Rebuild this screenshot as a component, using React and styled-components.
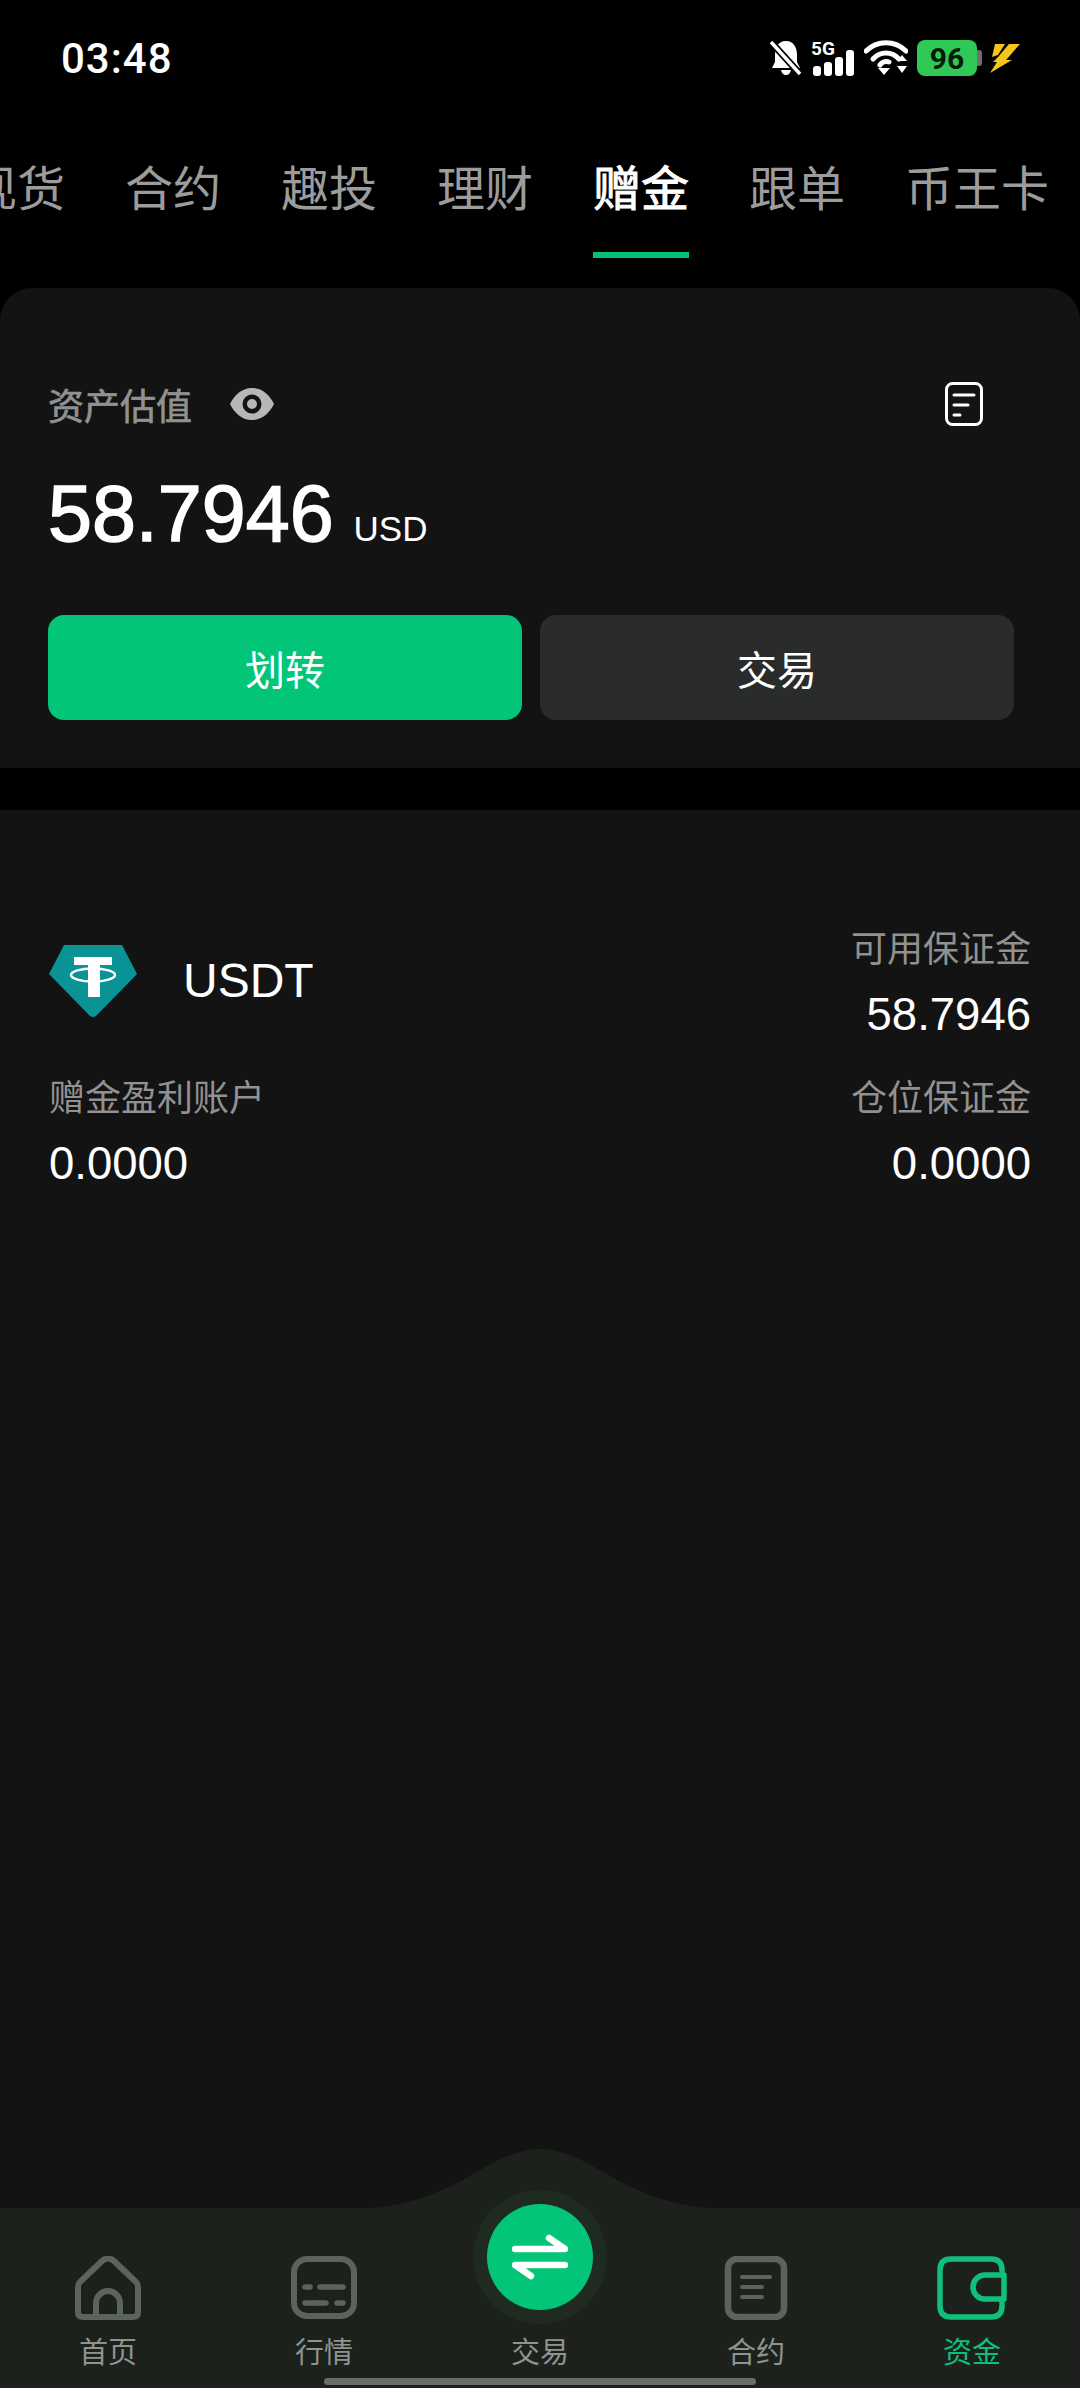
import React from 'react';
import styled, { createGlobalStyle } from 'styled-components';

const GlobalStyle = createGlobalStyle`
    html, body {
        margin: 0;
        padding: 0;
        background: #000;
    }
    * {
        box-sizing: border-box;
    }
`

const cjk = `"Noto Sans CJK SC", "Noto Sans", sans-serif`;
const latin = `"Liberation Sans", "Noto Sans CJK SC", sans-serif`;

const tabs = [
    { name: '现货' },
    { name: '合约' },
    { name: '趣投' },
    { name: '理财' },
    { name: '赠金', active: true },
    { name: '跟单' },
    { name: '币王卡' },
];

const HomeIcon = () => (
    <svg width="66" height="64" viewBox="0 0 66 64" fill="none" stroke="#5b645c" strokeWidth="6" strokeLinejoin="round">
        <path d="M3 31 Q3 28 5 26 L27 5 Q33 0 39 5 L61 26 Q63 28 63 31 L63 56 Q63 61 58 61 L8 61 Q3 61 3 56 Z" />
        <path d="M21 61 L21 47 A12 12 0 0 1 45 47 L45 61" />
    </svg>
);

const MarketIcon = () => (
    <svg width="66" height="64" viewBox="0 0 66 64" fill="none" stroke="#5b645c" strokeLinecap="round">
        <rect x="3" y="3" width="60" height="57" rx="13" strokeWidth="6" />
        <path d="M14 31 L19 31 M29 31 L52 31 M14 47 L35 47 M46 47 L52 47" strokeWidth="5.5" />
    </svg>
);

const ContractIcon = () => (
    <svg width="66" height="64" viewBox="0 0 66 64" fill="none" stroke="#5b645c" strokeLinecap="round">
        <rect x="5" y="3" width="56" height="58" rx="9" strokeWidth="6.5" />
        <path d="M19 21 L47 21 M19 31 L39 31 M19 41 L39 41" strokeWidth="4" />
    </svg>
);

const WalletIcon = () => (
    <svg width="70" height="64" viewBox="0 0 70 64" fill="none" stroke="#10bf7a" strokeWidth="5.5" strokeLinejoin="round">
        <path d="M65 19 L65 14 Q65 3 54 3 L14 3 Q3 3 3 14 L3 50 Q3 61 14 61 L54 61 Q65 61 65 50 L65 43" />
        <path d="M67 19 L48 19 A12 12 0 0 0 48 43 L67 43 Z" />
    </svg>
);

const navItems = [
    { label: '首页', icon: <HomeIcon /> },
    { label: '行情', icon: <MarketIcon /> },
    { label: '交易', center: true },
    { label: '合约', icon: <ContractIcon /> },
    { label: '资金', icon: <WalletIcon />, active: true },
];

const App = () => {
    return (<Page>
        <GlobalStyle />
        <StatusBar>
            <Clock>03:48</Clock>
            <StatusIcons>
                <svg width="32" height="36" viewBox="0 0 32 36">
                    <path d="M16 1 C24 1 27 8 27 15 L27 22 L30 28 L2 28 L5 22 L5 15 C5 8 8 1 16 1 Z M11 30 L21 30 Q20 35 16 35 Q12 35 11 30 Z" fill="#fff" />
                    <path d="M1 2 L30 34" stroke="#000" strokeWidth="7" />
                    <path d="M1 2 L30 34" stroke="#fff" strokeWidth="3.5" />
                </svg>
                <Signal>
                    <SignalLabel>5G</SignalLabel>
                    <svg width="44" height="36" viewBox="0 0 44 36" fill="#fff">
                        <rect x="2" y="26" width="8" height="10" rx="3" />
                        <rect x="13" y="22" width="8" height="14" rx="3" />
                        <rect x="24" y="17" width="8" height="19" rx="3" />
                        <rect x="35" y="10" width="8" height="26" rx="3" />
                    </svg>
                </Signal>
                <svg width="44" height="36" viewBox="0 0 44 36" fill="none" stroke="#fff" strokeWidth="5" strokeLinecap="round">
                    <path d="M2 11 C13 0 31 0 42 11" />
                    <path d="M9 19 C16 11 28 11 35 19" />
                    <path d="M16 25 C18 22 22 21 25 22" />
                    <path d="M14 28 L26 28 L20 35 Z M33 21 L38 15 L43 21 Z M33 26 L43 26 L38 33 Z" fill="#fff" stroke="none" />
                </svg>
                <Battery>96</Battery>
                <svg width="30" height="30" viewBox="0 0 30 30" fill="#f5c518">
                    <path d="M5 1 L15 1 L8 12 L2 14 Z" />
                    <path d="M19 1 L30 1 L16 17 L22 17 L0 30 L7 19 L3 19 L8 14 Z" />
                </svg>
            </StatusIcons>
        </StatusBar>

        <TabRow>
            {tabs.map(tab => <Tab key={tab.name} $active={tab.active}>{tab.name}</Tab>)}
        </TabRow>

        <AssetCard>
            <CardHead>
                <LabelGroup>
                    <Label $strong>资产估值</Label>
                    <svg width="44" height="32" viewBox="0 0 44 32">
                        <path fillRule="evenodd" fill="#b7b7b7" d="M22 0 C33 0 40 8 44 16 C40 24 33 32 22 32 C11 32 4 24 0 16 C4 8 11 0 22 0 Z M22 6.5 A9.5 9.5 0 1 0 22 25.5 A9.5 9.5 0 1 0 22 6.5 Z M22 11 A5 5 0 1 1 22 21 A5 5 0 1 1 22 11 Z" />
                    </svg>
                </LabelGroup>
                <svg width="38" height="44" viewBox="0 0 38 44" fill="none" stroke="#fff" strokeLinecap="round">
                    <rect x="1.5" y="1.5" width="35" height="41" rx="6" strokeWidth="3" />
                    <path d="M9 13 L29 13 M9 23 L23 23 M9 33 L15 33" strokeWidth="3" />
                </svg>
            </CardHead>
            <ValueRow>
                <BigValue>58.7946</BigValue>
                <Unit>USD</Unit>
            </ValueRow>
            <ButtonRow>
                <ActionButton $primary>划转</ActionButton>
                <ActionButton>交易</ActionButton>
            </ButtonRow>
        </AssetCard>

        <Account>
            <AccountRow>
                <CoinGroup>
                    <svg width="88" height="72" viewBox="0 0 88 72">
                        <path d="M15 0 L73 0 L88 29 L47 71 Q44 73 41 71 L0 29 Z" fill="#0a9395" />
                        <path d="M25 12 L63 12 L63 20 L51 20 L51 52 L39 52 L39 20 L25 20 Z" fill="#fff" />
                        <ellipse cx="44" cy="30" rx="22" ry="6.5" fill="none" stroke="#fff" strokeWidth="2.5" />
                    </svg>
                    <CoinName>USDT</CoinName>
                </CoinGroup>
                <Stat $right>
                    <Label>可用保证金</Label>
                    <StatValue>58.7946</StatValue>
                </Stat>
            </AccountRow>
            <AccountRow>
                <Stat>
                    <Label>赠金盈利账户</Label>
                    <StatValue>0.0000</StatValue>
                </Stat>
                <Stat $right>
                    <Label>仓位保证金</Label>
                    <StatValue>0.0000</StatValue>
                </Stat>
            </AccountRow>
        </Account>

        <BottomNav>
            <Hump width="420" height="62" viewBox="0 0 420 62">
                <path d="M0 62 C70 62 100 50 140 28 C170 10 190 1 210 1 C230 1 250 10 280 28 C320 50 350 62 420 62 Z" fill="#1c211c" />
            </Hump>
            <TradeRing>
                <TradeButton>
                    <svg width="56" height="46" viewBox="0 0 56 46" fill="none" stroke="#fff" strokeWidth="6.5" strokeLinecap="round" strokeLinejoin="round">
                        <path d="M3 15 L53 15 L37 4" />
                        <path d="M53 31 L3 31 L19 42" />
                    </svg>
                </TradeButton>
            </TradeRing>
            {navItems.map(item => (
                <NavItem key={item.label} $active={item.active}>
                    <NavIcon>{item.icon}</NavIcon>
                    {item.label}
                </NavItem>
            ))}
            <HomeBar />
        </BottomNav>
    </Page>);
}

export default App;

const Page = styled.div`
    display: flex;
    flex-direction: column;
    width: 1080px;
    height: 2388px;
    overflow: hidden;
    background: #000;
    font-family: ${cjk};
`

const StatusBar = styled.div`
    display: flex;
    align-items: center;
    justify-content: space-between;
    height: 116px;
    padding: 0 60px 0 61px;
`

const Clock = styled.div`
    font-family: Roboto, sans-serif;
    font-weight: 500;
    font-size: 42px;
    letter-spacing: 1px;
    color: #fff;
`

const StatusIcons = styled.div`
    display: flex;
    align-items: center;
    gap: 9px;
`

const Signal = styled.div`
    position: relative;
    display: flex;
    width: 44px;
    height: 36px;
`

const SignalLabel = styled.span`
    position: absolute;
    left: 0;
    top: 0;
    font-family: Roboto, sans-serif;
    font-weight: 700;
    font-size: 19px;
    line-height: 18px;
    color: #fff;
`

const Battery = styled.div`
    position: relative;
    display: flex;
    align-items: center;
    justify-content: center;
    width: 60px;
    height: 36px;
    margin-right: 4px;
    border-radius: 8px;
    background: #30c955;
    color: #051a0a;
    font-family: Roboto, sans-serif;
    font-weight: 700;
    font-size: 30px;

    &::after {
        content: "";
        position: absolute;
        right: -5px;
        top: 10px;
        width: 5px;
        height: 16px;
        border-radius: 0 3px 3px 0;
        background: #6f6f6f;
    }
`

const TabRow = styled.div`
    display: flex;
    height: 142px;
    margin-left: -61px;
    padding-top: 33px;
`

const Tab = styled.div`
    position: relative;
    flex: none;
    padding: 0 30px;
    font-size: 48px;
    line-height: 72px;
    color: ${props => props.$active ? '#fff' : '#9c9c9c'};
    -webkit-text-stroke: ${props => props.$active ? '1px #fff' : '0'};

    &::after {
        content: "";
        display: ${props => props.$active ? 'block' : 'none'};
        position: absolute;
        left: 30px;
        right: 30px;
        top: 103px;
        height: 6px;
        background: #04c077;
    }
`

const AssetCard = styled.div`
    height: 480px;
    margin: 30px 0 42px;
    padding: 87px 66px 0 48px;
    border-radius: 32px 32px 0 0;
    background: #131313;
`

const CardHead = styled.div`
    display: flex;
    align-items: center;
    justify-content: space-between;
    height: 58px;
    padding-right: 31px;
`

const LabelGroup = styled.div`
    display: flex;
    align-items: center;
    gap: 38px;
`

const Label = styled.div`
    font-size: 36px;
    line-height: 52px;
    color: #919191;
    -webkit-text-stroke: ${props => props.$strong ? '0.7px #919191' : '0'};
`

const ValueRow = styled.div`
    display: flex;
    align-items: baseline;
    gap: 20px;
    margin-top: 37px;
    font-family: ${latin};
    color: #fff;
`

const BigValue = styled.div`
    font-size: 79px;
    line-height: 88px;
    -webkit-text-stroke: 1.5px #fff;
`

const Unit = styled.div`
    font-size: 35px;
`

const ButtonRow = styled.div`
    display: grid;
    grid-template-columns: 1fr 1fr;
    gap: 18px;
    margin-top: 57px;
`

const ActionButton = styled.div`
    display: flex;
    align-items: center;
    justify-content: center;
    height: 105px;
    border-radius: 16px;
    font-size: 40px;
    color: #fff;
    background: ${props => props.$primary ? '#03c577' : '#2a2b2b'};
`

const Account = styled.div`
    display: flex;
    flex: 1;
    flex-direction: column;
    gap: 28px;
    padding: 110px 49px 0;
    background: #131313;
`

const AccountRow = styled.div`
    display: flex;
    align-items: center;
    justify-content: space-between;
`

const CoinGroup = styled.div`
    display: flex;
    align-items: center;
    gap: 46px;
`

const CoinName = styled.div`
    font-family: ${latin};
    font-size: 48px;
    color: #fff;
`

const Stat = styled.div`
    display: flex;
    flex-direction: column;
    gap: 17px;
    align-items: ${props => props.$right ? 'flex-end' : 'flex-start'};
`

const StatValue = styled.div`
    font-family: ${latin};
    font-size: 45.5px;
    line-height: 52px;
    color: #fff;
`

const BottomNav = styled.div`
    position: relative;
    display: grid;
    grid-template-columns: repeat(5, 1fr);
    height: 180px;
    padding-top: 48px;
    background: #1c211c;
`

const Hump = styled.svg`
    position: absolute;
    left: 330px;
    top: -60px;
`

const TradeRing = styled.div`
    position: absolute;
    left: 473px;
    top: -18px;
    display: flex;
    align-items: center;
    justify-content: center;
    width: 134px;
    height: 134px;
    border-radius: 50%;
    background: #1f2a21;
`

const TradeButton = styled.div`
    display: flex;
    align-items: center;
    justify-content: center;
    width: 106px;
    height: 106px;
    border-radius: 50%;
    background: #03c577;
`

const NavItem = styled.div`
    position: relative;
    display: flex;
    flex-direction: column;
    align-items: center;
    font-size: 29px;
    line-height: 40px;
    color: ${props => props.$active ? '#10bf7a' : '#8f948f'};
`

const NavIcon = styled.div`
    display: flex;
    justify-content: center;
    height: 64px;
    margin-bottom: 10px;
`

const HomeBar = styled.div`
    position: absolute;
    left: 324px;
    bottom: 3px;
    width: 432px;
    height: 7px;
    border-radius: 4px;
    background: #6a6e6a;
`
